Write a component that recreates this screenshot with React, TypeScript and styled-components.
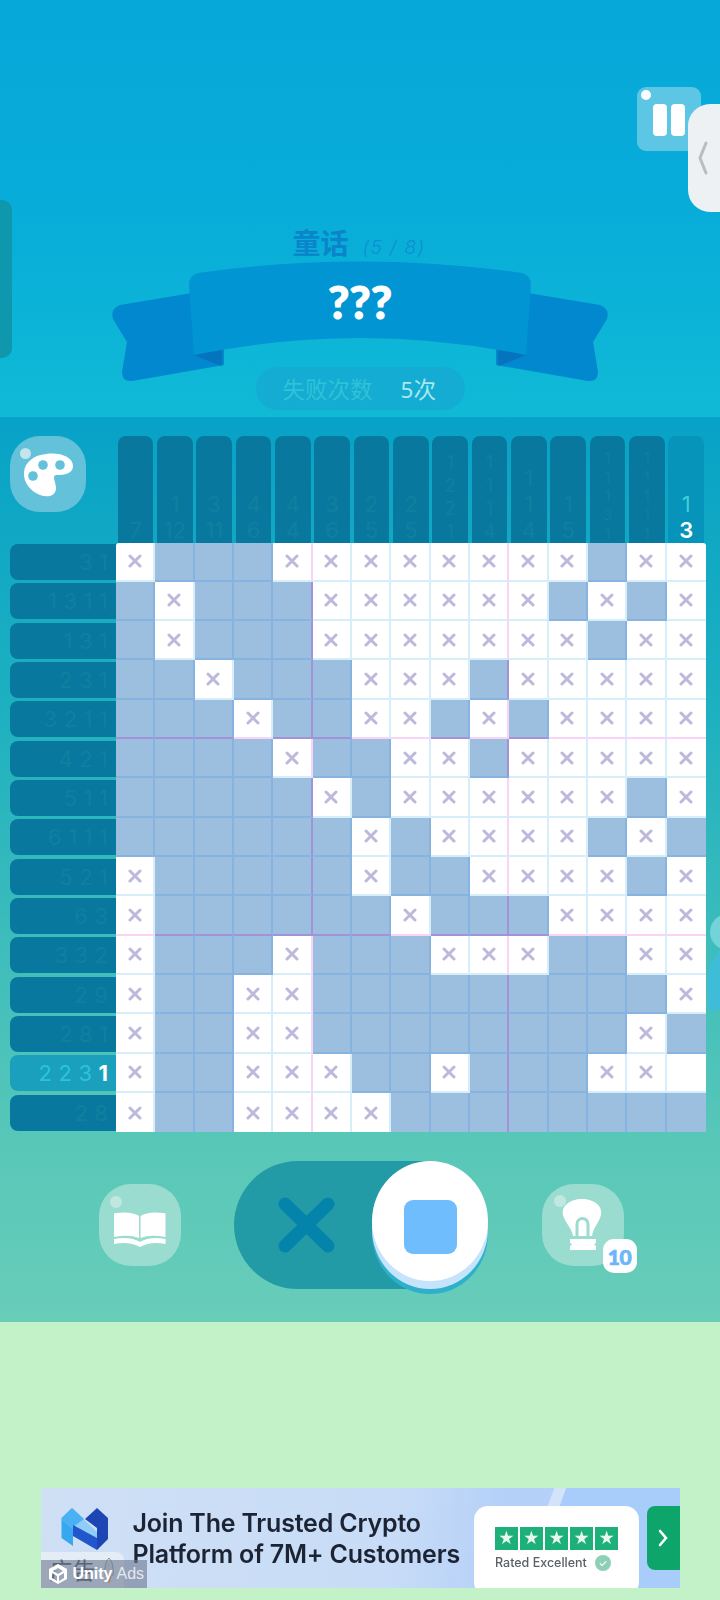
import React from 'react'
import styled, { createGlobalStyle } from 'styled-components'

const SANS = `Inter, "Noto Sans CJK SC", sans-serif`
const CJK = `"Noto Sans", "Noto Sans CJK SC", sans-serif`

const BOARD = [
  'xFFFxxxxxxxxFxx',
  'FxFFFxxxxxxFxFx',
  'FxFFFxxxxxxxFxx',
  'FFxFFFxxxFxxxxx',
  'FFFxFFxxFxFxxxx',
  'FFFFxFFxxFxxxxx',
  'FFFFFxFxxxxxxFx',
  'FFFFFFxFxxxxFxF',
  'xFFFFFxFFxxxxFx',
  'xFFFFFFxFFFxxxx',
  'xFFFxFFFxxxFFxx',
  'xFFxxFFFFFFFFFx',
  'xFFxxFFFFFFFFxF',
  'xFFxxxFFxFFFxx.',
  'xFFxxxxFFFFFFFF'
]

const ROW_CLUES = [
  [3, 1],
  [1, 3, 1, 1],
  [1, 3, 1],
  [2, 3, 1],
  [3, 2, 1, 1],
  [4, 2, 1],
  [5, 1, 1],
  [6, 1, 1, 1],
  [5, 2, 1],
  [6, 3],
  [3, 3, 2],
  [2, 9],
  [2, 8, 1],
  [2, 2, 3, 1],
  [2, 8]
]

const COL_CLUES = [
  [7],
  [1, 12],
  [3, 11],
  [4, 6],
  [4, 4],
  [3, 6],
  [2, 5],
  [2, 5],
  [1, 2, 2, 1],
  [1, 1, 1, 4],
  [1, 1, 4],
  [1, 5],
  [1, 1, 1, 3, 1],
  [1, 1, 1, 1, 1],
  [1, 3]
]

const GlobalStyle = createGlobalStyle`
  html, body {
    margin: 0;
    padding: 0;
    background: #c3f2c8;
    font-family: ${SANS};
  }
  * {
    box-sizing: border-box;
  }
`

const Page = styled.div`
  position: relative;
  width: 720px;
  height: 1600px;
  overflow: hidden;
  display: flex;
  flex-direction: column;
`

const Header = styled.header`
  height: 417px;
  padding-top: 225px;
  display: flex;
  flex-direction: column;
  align-items: center;
  background: linear-gradient(180deg, #06a8d9 0%, #08acd9 50%, #10bad5 100%);
`

const PauseButton = styled.div`
  position: absolute;
  left: 637px;
  top: 87px;
  width: 64px;
  height: 64px;
  border-radius: 9px;
  background: #5cc6e4;
  display: flex;
  gap: 4px;
  padding: 17px 0 0 16px;
`

const PauseBar = styled.span`
  width: 14px;
  height: 32px;
  border-radius: 4px;
  background: #fff;
`

const Shine = styled.span<{ $x: number; $y: number; $r: number; $color: string }>`
  position: absolute;
  left: ${p => p.$x - p.$r}px;
  top: ${p => p.$y - p.$r}px;
  width: ${p => p.$r * 2}px;
  height: ${p => p.$r * 2}px;
  border-radius: 50%;
  background: ${p => p.$color};
`

const SideHandle = styled.div`
  position: absolute;
  right: 0;
  top: 104px;
  width: 32px;
  height: 108px;
  border-radius: 22px 0 0 22px;
  background: #eef1f3;
  padding: 37px 0 0 9px;
`

const LeftTab = styled.div`
  position: absolute;
  left: 0;
  top: 200px;
  width: 12px;
  height: 158px;
  border-radius: 0 10px 10px 0;
  background: #0e97ad;
`

const EdgeBlob = styled.svg`
  position: absolute;
  right: 0;
  top: 900px;
`

const TitleRow = styled.div`
  display: flex;
  align-items: baseline;
  gap: 14px;
  height: 36px;
  margin-left: -2px;
`

const Title = styled.span`
  font-family: ${CJK};
  font-size: 28px;
  font-weight: 700;
  line-height: 36px;
  color: #0a84cb;
`

const Progress = styled.span`
  font-family: ${SANS};
  font-size: 19px;
  font-weight: 300;
  font-style: italic;
  letter-spacing: 1.4px;
  color: #0a90d2;
`

const Ribbon = styled.div`
  display: grid;
  justify-items: center;
  width: 500px;
  height: 122px;
  margin-top: -1px;
`

const RibbonArt = styled.svg`
  grid-area: 1 / 1;
`

const RibbonText = styled.div`
  grid-area: 1 / 1;
  margin-top: 18px;
  font-family: Lato, sans-serif;
  font-size: 46px;
  line-height: 48px;
  font-weight: 900;
  color: #fff;
  -webkit-text-stroke: 1px #fff;
`

const FailPill = styled.div`
  width: 209px;
  height: 43px;
  margin-top: -15px;
  padding-left: 27px;
  border-radius: 22px;
  background: #14acd2;
  display: flex;
  align-items: center;
  gap: 28px;
  font-family: ${CJK};
  font-size: 22.5px;
`

const FailLabel = styled.span`
  color: #2fc2d8;
`

const FailCount = styled.span`
  color: #a9e7f1;
`

const Panel = styled.section`
  height: 904.5px;
  padding-top: 19px;
  background: linear-gradient(180deg, #07a2c7 0%, #1db0c0 32%, #58c7b8 80%, #68cdb9 100%);
`

const BoardArea = styled.div`
  display: grid;
  grid-template-columns: 106.5px 590px;
  grid-template-rows: 106.5px 590px;
  margin-left: 9.5px;
`

const PaletteButton = styled.div`
  position: relative;
  width: 76px;
  height: 76px;
  border-radius: 30px;
  background: #63c1da;
`

const TopClues = styled.div`
  display: grid;
  grid-template-columns: repeat(15, 1fr);
`

const TopClue = styled.div<{ $active?: boolean }>`
  margin: 0 2px 0 1.7px;
  border-radius: 8px 8px 0 0;
  background: ${p => (p.$active ? '#0694ba' : '#08789f')};
  display: flex;
  flex-direction: column;
  justify-content: flex-end;
  align-items: center;
  overflow: hidden;
`

const TopDigit = styled.span<{ $count: number; $done?: boolean; $active?: boolean }>`
  font-size: ${p => (p.$count >= 5 ? 15 : p.$count === 4 ? 18 : 22)}px;
  line-height: ${p => (p.$count >= 5 ? 19 : p.$count === 4 ? 23 : 26)}px;
  font-weight: ${p => (p.$active ? 600 : 400)};
  color: ${p => (p.$active ? '#fff' : p.$done ? '#3fcfdc' : '#10809f')};
  white-space: nowrap;
`

const SideClues = styled.div`
  display: grid;
  grid-template-rows: repeat(15, 1fr);
`

const SideClue = styled.div<{ $active?: boolean }>`
  margin: 1.5px 0 1.8px;
  padding-right: 8px;
  border-radius: 8px 0 0 8px;
  background: ${p => (p.$active ? '#1a9fbd' : '#08789f')};
  display: flex;
  justify-content: flex-end;
  align-items: center;
  gap: 6.5px;
`

const SideDigit = styled.span<{ $bright?: boolean; $active?: boolean }>`
  font-size: 22px;
  font-weight: ${p => (p.$active ? 700 : 400)};
  color: ${p => (p.$active ? '#fff' : p.$bright ? '#2cc4d6' : '#10809f')};
`

const Grid = styled.div`
  display: grid;
  grid-template-columns: repeat(15, 1fr);
  grid-template-rows: repeat(15, 1fr);
  border-radius: 3px 3px 0 0;
  overflow: hidden;
`

const Cell = styled.div<{ $filled: boolean; $col: number; $row: number }>`
  display: flex;
  align-items: center;
  justify-content: center;
  background: ${p => (p.$filled ? '#9dbfdf' : '#fff')};
  border-right: ${p => (p.$col === 14 ? 'none' : '2px solid')};
  border-bottom: ${p => (p.$row === 14 ? 'none' : '2px solid')};
  border-right-color: ${p =>
    p.$col % 5 === 4 ? (p.$filled ? '#a293d8' : '#f9d4f7') : p.$filled ? '#86b3df' : '#d6edfa'};
  border-bottom-color: ${p =>
    p.$row % 5 === 4 ? (p.$filled ? '#a293d8' : '#f9d4f7') : p.$filled ? '#86b3df' : '#d6edfa'};
`

const Controls = styled.div`
  display: flex;
  align-items: center;
  gap: 53.5px;
  margin: 28.5px 0 0 98.5px;
  height: 128px;
`

const RoundButton = styled.div`
  position: relative;
  width: 82px;
  height: 82px;
  border-radius: 32px;
  background: #9adccf;
`

const Badge = styled.div`
  position: absolute;
  left: 61px;
  top: 55px;
  width: 34px;
  height: 34px;
  border-radius: 11px;
  background: #fff;
  display: flex;
  align-items: center;
  justify-content: center;
  font-family: Lato, sans-serif;
  font-size: 21px;
  font-weight: 900;
  letter-spacing: -0.5px;
  color: #6db6f9;
  -webkit-text-stroke: 0.7px #6db6f9;
`

const Toggle = styled.div`
  position: relative;
  width: 254px;
  height: 128px;
  border-radius: 64px;
  background: #239ba6;
  padding: 36px 0 0 44px;
`

const Knob = styled.div`
  position: absolute;
  right: 0;
  top: 0;
  width: 116px;
  height: 120px;
  border-radius: 50%;
  background: #fff;
  box-shadow: 0 8px 0 #c5e3fb, 0 13px 0 #2eb0cc;
  display: flex;
  align-items: center;
  justify-content: center;
  padding-top: 12px;
`

const KnobSquare = styled.div`
  width: 53px;
  height: 54px;
  border-radius: 9px;
  background: #70bdfe;
`

const Footer = styled.footer`
  flex: 1;
  background: #c3f2c8;
  padding: 166px 0 0 40.5px;
`

const Ad = styled.div`
  position: relative;
  width: 639px;
  height: 100px;
  overflow: hidden;
  background: linear-gradient(95deg, #cfe0f5 0%, #c8dcf7 55%, #b4d0f8 72%, #b6d3fa 100%);
  display: flex;
  padding: 20px 0 0 19px;
`

const AdArc = styled.div`
  position: absolute;
  left: 495px;
  top: 0;
  width: 220px;
  height: 100px;
  transform: skewX(-20deg);
  border-left: 12px solid #d3e3fa;
  background: #a9cdfb;
`

const AdLogo = styled.svg`
  position: relative;
  flex: none;
  filter: blur(0.4px);
`

const AdText = styled.div`
  position: relative;
  margin: 0 0 0 23px;
  width: 342px;
  font-family: Inter, sans-serif;
  font-size: 25px;
  line-height: 31px;
  font-weight: 600;
  letter-spacing: -0.2px;
  color: #1c2333;
  white-space: nowrap;
  filter: blur(0.5px);
`

const AdCard = styled.div`
  position: absolute;
  left: 433.5px;
  top: 18px;
  width: 165px;
  height: 90px;
  border-radius: 14px;
  background: #fff;
  padding: 21px 0 0 21px;
  filter: blur(0.3px);
`

const StarRow = styled.div`
  display: flex;
  gap: 2.5px;
`

const StarBox = styled.div`
  width: 22.6px;
  height: 23px;
  background: #1db07a;
  display: flex;
  align-items: center;
  justify-content: center;
  color: #e8f7f0;
  font-size: 16px;
  line-height: 1;
`

const RatedRow = styled.div`
  display: flex;
  align-items: center;
  gap: 8px;
  margin-top: 5px;
  font-family: Inter, sans-serif;
  font-size: 12.5px;
  font-weight: 500;
  color: #5a6068;
`

const CheckDot = styled.span`
  width: 16px;
  height: 16px;
  border-radius: 50%;
  background: #8ecfb8;
  color: #fff;
  font-size: 10px;
  display: flex;
  align-items: center;
  justify-content: center;
`

const AdGo = styled.div`
  position: absolute;
  right: 0;
  top: 18px;
  width: 33px;
  height: 64px;
  border-radius: 8px 0 0 8px;
  background: #0ea56a;
  display: flex;
  align-items: center;
  justify-content: center;
`

const AdTag = styled.div`
  position: absolute;
  left: 0;
  bottom: 0;
  width: 83px;
  height: 36px;
  border-radius: 0 8px 0 0;
  background: rgba(232, 238, 246, 0.85);
  padding-left: 9px;
  display: flex;
  gap: 7px;
  font-family: ${CJK};
  font-size: 23px;
  line-height: 36px;
  color: #3c4450;
`

const UnityTag = styled.div`
  position: absolute;
  left: 0;
  bottom: 0;
  width: 106px;
  height: 28px;
  background: rgba(110, 122, 145, 0.62);
  display: flex;
  align-items: center;
  padding-left: 6px;
  gap: 4px;
  font-family: "Liberation Sans", sans-serif;
  font-size: 16px;
  color: #fff;
`

const UnityName = styled.b`
  font-weight: 700;
`

const UnityAds = styled.span`
  font-weight: 400;
  color: #e4e8ef;
`

const CrossMark = () => (
  <svg width="14" height="14" viewBox="0 0 14 14">
    <path d="M2 2 L12 12 M12 2 L2 12" stroke="#bcb9dc" strokeWidth="3" strokeLinecap="round" />
  </svg>
)

const App = () => {
  return (
    <Page>
      <GlobalStyle />
      <Header>
        <TitleRow>
          <Title>童话</Title>
          <Progress>(5 / 8)</Progress>
        </TitleRow>
        <Ribbon>
          <RibbonArt width="500" height="122" viewBox="110 260 500 122">
            <path
              d="M192 293 L120 305 Q110 309 113 319 L127 342 L122 372 Q122 382 132 381 L224 365 L224 320 Z"
              fill="#0288cf"
            />
            <path
              d="M528 293 L600 305 Q610 309 607 319 L593 342 L598 372 Q598 382 588 381 L496 365 L496 320 Z"
              fill="#0288cf"
            />
            <path d="M193 355 L222 348 L222 366 Z" fill="#0573bd" />
            <path d="M527 355 L498 348 L498 366 Z" fill="#0573bd" />
            <path
              d="M189 284 Q189 276 198 273 Q360 250 522 273 Q531 276 531 284 L526 355 Q360 321 194 355 Z"
              fill="#0295d3"
            />
          </RibbonArt>
          <RibbonText>???</RibbonText>
        </Ribbon>
        <FailPill>
          <FailLabel>失败次数</FailLabel>
          <FailCount>5次</FailCount>
        </FailPill>
      </Header>

      <Panel>
        <BoardArea>
          <PaletteButton>
            <Shine $x={16} $y={17} $r={5.5} $color="#c5e4ec" />
            <svg width="76" height="76" viewBox="0 0 76 76">
              <path
                d="M36 18 C50 16 63 21 63 30 C63 38 54 39 47 39 C41 39 46 46 46 52 C46 60 38 62 30 59 C20 55 13 46 14 36 C15 26 24 19 36 18 Z"
                fill="#fff"
              />
              <circle cx="33" cy="29" r="4.8" fill="#63c1da" />
              <circle cx="50" cy="29" r="4.8" fill="#63c1da" />
              <circle cx="23" cy="40" r="4.8" fill="#63c1da" />
            </svg>
          </PaletteButton>
          <TopClues>
            {COL_CLUES.map((clue, i) => (
              <TopClue key={i} $active={i === 14}>
                {clue.map((n, j) => (
                  <TopDigit
                    key={j}
                    $count={clue.length}
                    $done={i === 14 && j === 0}
                    $active={i === 14 && j === 1}
                  >
                    {n}
                  </TopDigit>
                ))}
              </TopClue>
            ))}
          </TopClues>
          <SideClues>
            {ROW_CLUES.map((clue, i) => (
              <SideClue key={i} $active={i === 13}>
                {clue.map((n, j) => (
                  <SideDigit key={j} $bright={i === 13} $active={i === 13 && j === 3}>
                    {n}
                  </SideDigit>
                ))}
              </SideClue>
            ))}
          </SideClues>
          <Grid>
            {BOARD.map((line, r) =>
              line.split('').map((c, col) => (
                <Cell key={`${r}-${col}`} $filled={c === 'F'} $col={col} $row={r}>
                  {c === 'x' && <CrossMark />}
                </Cell>
              ))
            )}
          </Grid>
        </BoardArea>

        <Controls>
          <RoundButton>
            <Shine $x={17.5} $y={17.5} $r={6} $color="#c0e8e0" />
            <svg width="82" height="82" viewBox="0 0 82 82">
              <path d="M15 30 Q15 29 17 29 Q33 27 40 32 L40 54 Q30 50 15 53 Z" fill="#fff" />
              <path d="M66.5 30 Q66.5 29 64.5 29 Q49 27 41.5 32 L41.5 54 Q51 50 66.5 53 Z" fill="#fff" />
              <path
                d="M15 55 Q31 52 41 58 Q51 52 66.5 55 L66.5 60 Q52 57 41 63 Q30 57 15 60 Z"
                fill="#fff"
              />
            </svg>
          </RoundButton>

          <Toggle>
            <svg width="57" height="56" viewBox="0 0 57 56">
              <path
                d="M7 7 L50 49 M50 7 L7 49"
                stroke="#0584ab"
                strokeWidth="13"
                strokeLinecap="round"
              />
            </svg>
            <Knob>
              <KnobSquare />
            </Knob>
          </Toggle>

          <RoundButton>
            <Shine $x={18} $y={17} $r={6} $color="#c0e8e0" />
            <svg width="82" height="82" viewBox="0 0 82 82">
              <path
                d="M40 15 C52 15 61 22 59 31 C57 39 51 44 50 52 L31 52 C30 44 23 39 21 31 C19 22 28 15 40 15 Z"
                fill="#fff"
              />
              <path d="M35 52 L35 40 A5.5 5.5 0 0 1 46 40 L46 52" fill="none" stroke="#9adccf" strokeWidth="3" />
              <path
                d="M28 55 L54 55 L54 59 L52 60.5 L54 62 L54 66 L28 66 L28 62 L30 60.5 L28 59 Z"
                fill="#fff"
              />
            </svg>
            <Badge>10</Badge>
          </RoundButton>
        </Controls>
      </Panel>

      <Footer>
        <Ad>
          <AdArc />
          <AdLogo width="50" height="44" viewBox="0 0 50 44">
            <path d="M1.5 10 L12 0 L24 11 L13 19 L13 38 L1.5 30 Z" fill="#37a7f0" />
            <path d="M1.5 10 L12 0 L13 1 L37 24 L37 42 L1.5 12 Z" fill="#5bbcf6" opacity="0.55" />
            <path d="M13 17 L37 30 L37 42 L13 28 Z" fill="#2156cc" />
            <path d="M25 11 L37 0 L48 10 L48 31 L37 42 L37 20 Z" fill="#1d45b4" />
          </AdLogo>
          <AdText>
            Join The Trusted Crypto
            <br />
            Platform of 7M+ Customers
          </AdText>
          <AdCard>
            <StarRow>
              {[0, 1, 2, 3, 4].map(i => (
                <StarBox key={i}>★</StarBox>
              ))}
            </StarRow>
            <RatedRow>
              Rated Excellent
              <CheckDot>✓</CheckDot>
            </RatedRow>
          </AdCard>
          <AdGo>
            <svg width="12" height="20" viewBox="0 0 12 20">
              <path d="M3 3 L9 10 L3 17" fill="none" stroke="#fff" strokeWidth="2.6" strokeLinecap="round" />
            </svg>
          </AdGo>
          <AdTag>
            <span>广告</span>
            <svg width="12" height="36" viewBox="0 0 14 36">
              <path d="M7 4 C11 8 12 14 12 24 L2 24 C2 14 3 8 7 4 Z" fill="#d9dde3" stroke="#7a8494" strokeWidth="1" />
              <path d="M4 25 L10 25 L7 34 Z" fill="#e8702e" />
            </svg>
          </AdTag>
          <UnityTag>
            <svg width="22" height="22" viewBox="0 0 22 22">
              <path
                d="M11 1 L20 6 L20 16 L11 21 L2 16 L2 6 Z M11 5 L6 8 L11 11 L16 8 Z M5 10 L5 15 L10 18 L10 13 Z M17 10 L12 13 L12 18 L17 15 Z"
                fill="#fff"
                fillRule="evenodd"
              />
            </svg>
            <UnityName>Unity</UnityName>
            <UnityAds>Ads</UnityAds>
          </UnityTag>
        </Ad>
      </Footer>

      <PauseButton>
        <Shine $x={9} $y={8} $r={5} $color="#fff" />
        <PauseBar />
        <PauseBar />
      </PauseButton>
      <SideHandle>
        <svg width="12" height="34" viewBox="0 0 12 34">
          <path d="M9 2 L3 17 L9 32" fill="none" stroke="#b9bdc1" strokeWidth="3" strokeLinecap="round" />
        </svg>
      </SideHandle>
      <LeftTab />
      <EdgeBlob width="14" height="110" viewBox="0 0 14 110">
        <circle cx="22" cy="32" r="18" fill="#74d3d8" />
        <path d="M14 50 Q2 62 2 80 L2 110 L14 110 Z" fill="#3fbcd8" />
      </EdgeBlob>
    </Page>
  )
}

export default App
